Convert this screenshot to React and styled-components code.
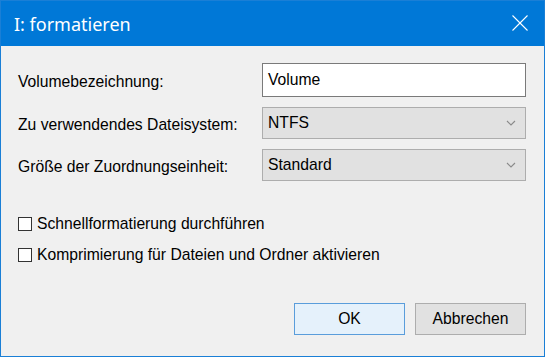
import React from "react";
import styled, { createGlobalStyle } from "styled-components";

const GlobalStyle = createGlobalStyle`
  html, body { margin: 0; padding: 0; background: #f0f0f0; }
  * { box-sizing: border-box; }
`;

const Window = styled.div`
  width: 545px;
  height: 357px;
  display: flex;
  flex-direction: column;
  border: 1px solid #1a7fd6;
  background: #f0f0f0;
  font-family: "Liberation Sans", Arial, sans-serif;
  font-size: 15.7px;
  color: #000;
`;

const TitleBar = styled.div`
  height: 45px;
  flex: none;
  display: flex;
  align-items: center;
  justify-content: space-between;
  background: #0078d7;
  padding-left: 13px;
  padding-right: 16px;
`;

const Title = styled.span`
  font-family: "Noto Sans", "Open Sans", sans-serif;
  font-size: 18px;
  color: #fff;
  margin-top: 1px;
`;

const CloseIcon = styled.svg`
  width: 16px;
  height: 16px;
  display: block;
  margin-top: -1px;
`;

const Body = styled.div`
  flex: 1;
  display: flex;
  flex-direction: column;
  padding: 17px 17px 21px 17px;
`;

const FormGrid = styled.div`
  display: grid;
  grid-template-columns: 244px 264px;
  grid-template-rows: 34px 32px 32px;
  row-gap: 10px;
  align-items: center;
`;

const Label = styled.span`
  line-height: 1;
  padding-top: 3px;
`;

const TextInput = styled.div`
  height: 34px;
  background: #fff;
  border: 1px solid #7a7a7a;
  display: flex;
  align-items: center;
  padding-left: 5px;
`;

const Select = styled.div`
  height: 32px;
  background: #e1e1e1;
  border: 1px solid #adadad;
  display: flex;
  align-items: center;
  justify-content: space-between;
  padding-left: 5px;
  padding-right: 9px;
`;

const Chevron = styled.svg`
  width: 10px;
  height: 6px;
  display: block;
`;

const CheckList = styled.div`
  margin-top: 27px;
  display: flex;
  flex-direction: column;
`;

const CheckRow = styled.label`
  height: 31px;
  display: flex;
  align-items: center;
  gap: 5px;
`;

const Box = styled.span`
  width: 14px;
  height: 14px;
  border: 1px solid #333;
  background: #fff;
  flex: none;
`;

const ButtonRow = styled.div`
  margin-top: auto;
  display: flex;
  justify-content: flex-end;
  gap: 10px;
  padding-right: 1px;
`;

const Button = styled.button`
  width: 111px;
  height: 32px;
  font-family: "Liberation Sans", Arial, sans-serif;
  font-size: 15.7px;
  color: #000;
  padding: 0;
  background: ${(p) => (p.$primary ? "#e5f1fb" : "#e1e1e1")};
  border: 1px solid ${(p) => (p.$primary ? "#5a9ddb" : "#adadad")};
`;

function ChevronDown() {
  return (
    <Chevron viewBox="0 0 10 6">
      <polyline points="1,1 5,5 9,1" fill="none" stroke="#8a8a8a" strokeWidth="1.1" />
    </Chevron>
  );
}

export default function App() {
  return (
    <>
      <GlobalStyle />
      <Window>
        <TitleBar>
          <Title>I: formatieren</Title>
          <CloseIcon viewBox="0 0 16 16">
            <line x1="0.5" y1="0.5" x2="15.5" y2="15.5" stroke="#fff" strokeWidth="1.1" />
            <line x1="15.5" y1="0.5" x2="0.5" y2="15.5" stroke="#fff" strokeWidth="1.1" />
          </CloseIcon>
        </TitleBar>
        <Body>
          <FormGrid>
            <Label>Volumebezeichnung:</Label>
            <TextInput>Volume</TextInput>
            <Label>Zu verwendendes Dateisystem:</Label>
            <Select>
              NTFS
              <ChevronDown />
            </Select>
            <Label>Größe der Zuordnungseinheit:</Label>
            <Select>
              Standard
              <ChevronDown />
            </Select>
          </FormGrid>
          <CheckList>
            <CheckRow>
              <Box />
              Schnellformatierung durchführen
            </CheckRow>
            <CheckRow>
              <Box />
              Komprimierung für Dateien und Ordner aktivieren
            </CheckRow>
          </CheckList>
          <ButtonRow>
            <Button $primary>OK</Button>
            <Button>Abbrechen</Button>
          </ButtonRow>
        </Body>
      </Window>
    </>
  );
}
